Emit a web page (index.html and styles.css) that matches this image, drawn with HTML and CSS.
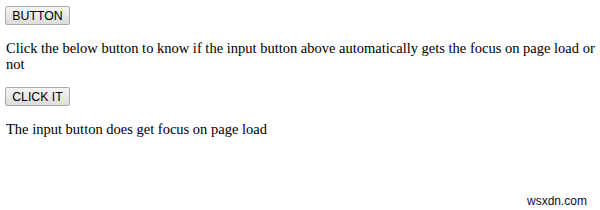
FILE: index.html
```html
<!DOCTYPE html>
<html lang="en">
<head>
    <meta charset="UTF-8">
    <title>Autofocus</title>
    <link rel="stylesheet" href="styles.css">
</head>
<body>
    <input type="button" class="btn" value="BUTTON" autofocus>
    <p>Click the below button to know if the input button above automatically gets the focus on page load or not</p>
    <button class="btn">CLICK IT</button>
    <p class="result">The input button does get focus on page load</p>
    <span class="watermark">wsxdn.com</span>
</body>
</html>
```

FILE: styles.css
```css
body {
    margin: 6px 5px;
    font-family: "Liberation Serif", "Times New Roman", serif;
    font-size: 14.5px;
    color: #000;
}
p {
    margin: 15px 0 15px 1px;
    line-height: 16px;
}
.btn {
    display: block;
    font-family: "Liberation Sans", Arial, sans-serif;
    font-size: 12.3px;
    width: 65px;
    height: 19px;
    padding: 0;
    border: 1px solid #a9a9a9;
    border-radius: 2px;
    background: linear-gradient(#f5f5f5, #dcdcdc);
    color: #000;
    outline: none;
}
.watermark {
    position: absolute;
    right: 13px;
    bottom: 2px;
    font-family: "Liberation Sans", Arial, sans-serif;
    font-size: 12px;
    color: #111;
}
```
